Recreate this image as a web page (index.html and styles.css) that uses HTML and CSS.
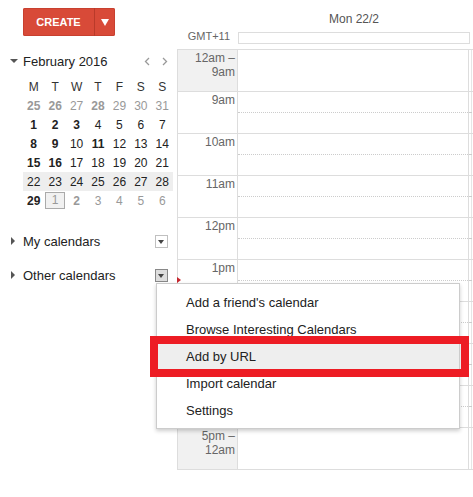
FILE: index.html
```html
<!DOCTYPE html>
<html lang="en">
<head>
    <meta charset="UTF-8">
    <title>Calendar</title>
    <link rel="stylesheet" href="styles.css">
</head>
<body>
<div class="app">
    <div class="side">
        <div class="create-wrap">
            <div class="create">
                <span class="create-main">CREATE</span>
                <span class="create-drop">
                    <svg width="8" height="7" viewBox="0 0 8 7"><path d="M0 0h8L4 7z" fill="#fff"/></svg>
                </span>
            </div>
        </div>

        <div class="mini">
            <div class="mini-head">
                <span class="caret-down"></span>
                <span class="month">February 2016</span>
                <span class="nav">
                    <svg width="6" height="9" viewBox="0 0 6 9"><path d="M5 1L1.5 4.5 5 8" fill="none" stroke="#999" stroke-width="1.3"/></svg>
                    <svg width="6" height="9" viewBox="0 0 6 9"><path d="M1 1l3.5 3.5L1 8" fill="none" stroke="#999" stroke-width="1.3"/></svg>
                </span>
            </div>
            <table class="mini-cal">
                <tr class="dow"><td>M</td><td>T</td><td>W</td><td>T</td><td>F</td><td>S</td><td>S</td></tr>
                <tr><td class="off b">25</td><td class="off b">26</td><td class="off">27</td><td class="off b">28</td><td class="off">29</td><td class="off">30</td><td class="off">31</td></tr>
                <tr><td class="b">1</td><td class="b">2</td><td class="b">3</td><td>4</td><td>5</td><td>6</td><td>7</td></tr>
                <tr><td class="b">8</td><td class="b">9</td><td>10</td><td class="b">11</td><td>12</td><td>13</td><td>14</td></tr>
                <tr><td class="b">15</td><td class="b">16</td><td>17</td><td>18</td><td>19</td><td>20</td><td>21</td></tr>
                <tr class="week"><td>22</td><td>23</td><td>24</td><td>25</td><td>26</td><td>27</td><td>28</td></tr>
                <tr><td class="b">29</td><td class="off"><span class="today">1</span></td><td class="off b">2</td><td class="off">3</td><td class="off">4</td><td class="off">5</td><td class="off">6</td></tr>
            </table>
        </div>

        <div class="cal-list">
            <div class="cal-row">
                <span class="caret-right"></span>
                <span class="cal-name">My calendars</span>
                <span class="dd"></span>
            </div>
            <div class="cal-row">
                <span class="caret-right"></span>
                <span class="cal-name">Other calendars</span>
                <span class="dd active"></span>
            </div>
        </div>
    </div>

    <div class="main">
        <div class="day-head">Mon 22/2</div>
        <div class="allday">
            <span class="tz">GMT+11</span>
            <div class="allday-box"></div>
        </div>
        <div class="grid">
            <div class="row"><div class="t shade">12am –<br>9am</div><div class="d"></div><div class="g"></div></div>
            <div class="row"><div class="t">9am</div><div class="d half"></div><div class="g half"></div></div>
            <div class="row"><div class="t">10am</div><div class="d half"></div><div class="g half"></div></div>
            <div class="row"><div class="t">11am</div><div class="d half"></div><div class="g half"></div></div>
            <div class="row"><div class="t">12pm</div><div class="d half"></div><div class="g half"></div></div>
            <div class="row"><div class="t">1pm</div><div class="d half"></div><div class="g half"></div></div>
            <div class="row"><div class="t"></div><div class="d half"></div><div class="g half"></div></div>
            <div class="row"><div class="t"></div><div class="d half"></div><div class="g half"></div></div>
            <div class="row"><div class="t"></div><div class="d half"></div><div class="g half"></div></div>
            <div class="row"><div class="t shade">5pm –<br>12am</div><div class="d"></div><div class="g"></div></div>
        </div>
    </div>
</div>

<span class="pointer"></span>
<div class="menu">
    <div class="menu-item">Add a friend's calendar</div>
    <div class="menu-item">Browse Interesting Calendars</div>
    <div class="menu-item hover">Add by URL</div>
    <div class="menu-item">Import calendar</div>
    <div class="menu-item">Settings</div>
</div>
<div class="mark"></div>
</body>
</html>
```

FILE: styles.css
```css
body {
    margin: 0;
    font-family: "Liberation Sans", Arial, sans-serif;
    color: #222;
    background: #fff;
    overflow: hidden;
}

.app {
    display: flex;
    width: 473px;
    height: 497px;
}

/* sidebar */

.side {
    width: 177px;
    flex: none;
}

.create-wrap {
    padding: 8px 0 0 23px;
}

.create {
    display: flex;
    width: 92px;
    height: 28px;
    background: #d84a38;
    border-radius: 2px;
    box-shadow: inset 0 0 0 1px #c8402f;
}

.create-main {
    width: 71px;
    color: #fff;
    font-size: 11px;
    font-weight: bold;
    line-height: 28px;
    text-align: center;
    border-right: 1px solid #b93a2a;
}

.create-drop {
    flex: 1;
    display: flex;
    align-items: center;
    justify-content: center;
}

.mini {
    margin-top: 17px;
}

.mini-head {
    display: flex;
    align-items: center;
    height: 16px;
    padding-left: 10px;
}

.caret-down {
    width: 0;
    height: 0;
    border-left: 4px solid transparent;
    border-right: 4px solid transparent;
    border-top: 4px solid #555;
    margin-right: 5px;
}

.month {
    font-size: 13px;
    color: #222;
}

.nav {
    margin-left: auto;
    margin-right: 9px;
    display: flex;
    gap: 12px;
}

.mini-cal {
    margin: 8px 0 0 23px;
    width: 150px;
    table-layout: fixed;
    border-collapse: collapse;
    font-size: 12px;
}

.mini-cal td {
    height: 19px;
    padding: 0;
    text-align: center;
    color: #222;
}

.mini-cal .dow td {
    color: #333;
}

.mini-cal td.off {
    color: #999;
}

.mini-cal td.b {
    font-weight: bold;
}

.mini-cal .week td {
    background: #eee;
}

.today {
    display: inline-block;
    width: 18px;
    height: 15px;
    line-height: 15px;
    border: 1px solid #aaa;
    background: #f1f1f1;
    color: #999;
}

.cal-list {
    margin-top: 14px;
}

.cal-row {
    display: flex;
    align-items: center;
    height: 34px;
    padding: 0 9px 0 11px;
}

.caret-right {
    width: 0;
    height: 0;
    border-top: 4px solid transparent;
    border-bottom: 4px solid transparent;
    border-left: 4px solid #555;
    margin-right: 8px;
}

.cal-name {
    font-size: 13px;
    color: #222;
}

.dd {
    margin-left: auto;
    width: 11px;
    height: 11px;
    border: 1px solid #c0c0c0;
    position: relative;
}

.dd::after {
    content: "";
    position: absolute;
    left: 2px;
    top: 4px;
    border-left: 3.5px solid transparent;
    border-right: 3.5px solid transparent;
    border-top: 4px solid #444;
}

.dd.active {
    background: #ddd;
    border-color: #888;
}

/* day view */

.main {
    flex: 1;
    overflow: hidden;
}

.day-head {
    height: 31px;
    box-sizing: border-box;
    padding: 12px 0 0 61px;
    width: 293px;
    text-align: center;
    font-size: 12px;
    line-height: 14px;
    color: #555;
}

.allday {
    display: flex;
    height: 18px;
}

.tz {
    width: 61px;
    box-sizing: border-box;
    padding: 0 8px 0 0;
    text-align: right;
    font-size: 11px;
    line-height: 13px;
    margin-top: -1px;
    color: #666;
}

.allday-box {
    width: 232px;
    height: 12px;
    margin-top: 1px;
    box-sizing: border-box;
    border: 1px solid #ddd;
}

.grid {
    width: 295px;
    border-left: 1px solid #ddd;
    border-bottom: 1px solid #ddd;
}

.row {
    display: flex;
    height: 42px;
    box-sizing: border-box;
    border-top: 1px solid #ddd;
}

.t {
    width: 57px;
    flex: none;
    border-right: 1px solid #ddd;
    padding: 1px 2px 0 0;
    text-align: right;
    font-size: 12px;
    line-height: 14px;
    color: #666;
}

.t.shade {
    background: #f1f1f1;
}

.d {
    width: 230px;
    flex: none;
    border-right: 1px solid #ddd;
    position: relative;
}

.g {
    width: 2px;
    flex: none;
    border-right: 1px solid #e6e6e6;
    position: relative;
}

.half::after {
    content: "";
    position: absolute;
    left: 0;
    right: 0;
    top: 20px;
    border-top: 1px dotted #ccc;
}

/* dropdown menu over the grid */

.pointer {
    position: absolute;
    left: 177px;
    top: 277px;
    border-top: 3px solid transparent;
    border-bottom: 3px solid transparent;
    border-left: 4px solid #c6262e;
}

.menu {
    position: absolute;
    left: 156px;
    top: 283px;
    width: 304px;
    height: 146px;
    box-sizing: border-box;
    padding-top: 5px;
    background: #fff;
    border: 1px solid #ccc;
    box-shadow: 0 2px 4px rgba(0, 0, 0, 0.2);
}

.menu-item {
    height: 27px;
    line-height: 27px;
    padding-left: 29px;
    font-size: 13px;
    color: #222;
}

.menu-item.hover {
    background: #eee;
}

.mark {
    position: absolute;
    left: 150px;
    top: 336px;
    width: 319px;
    height: 41px;
    box-sizing: border-box;
    border: 8px solid #ed1c24;
}
```
